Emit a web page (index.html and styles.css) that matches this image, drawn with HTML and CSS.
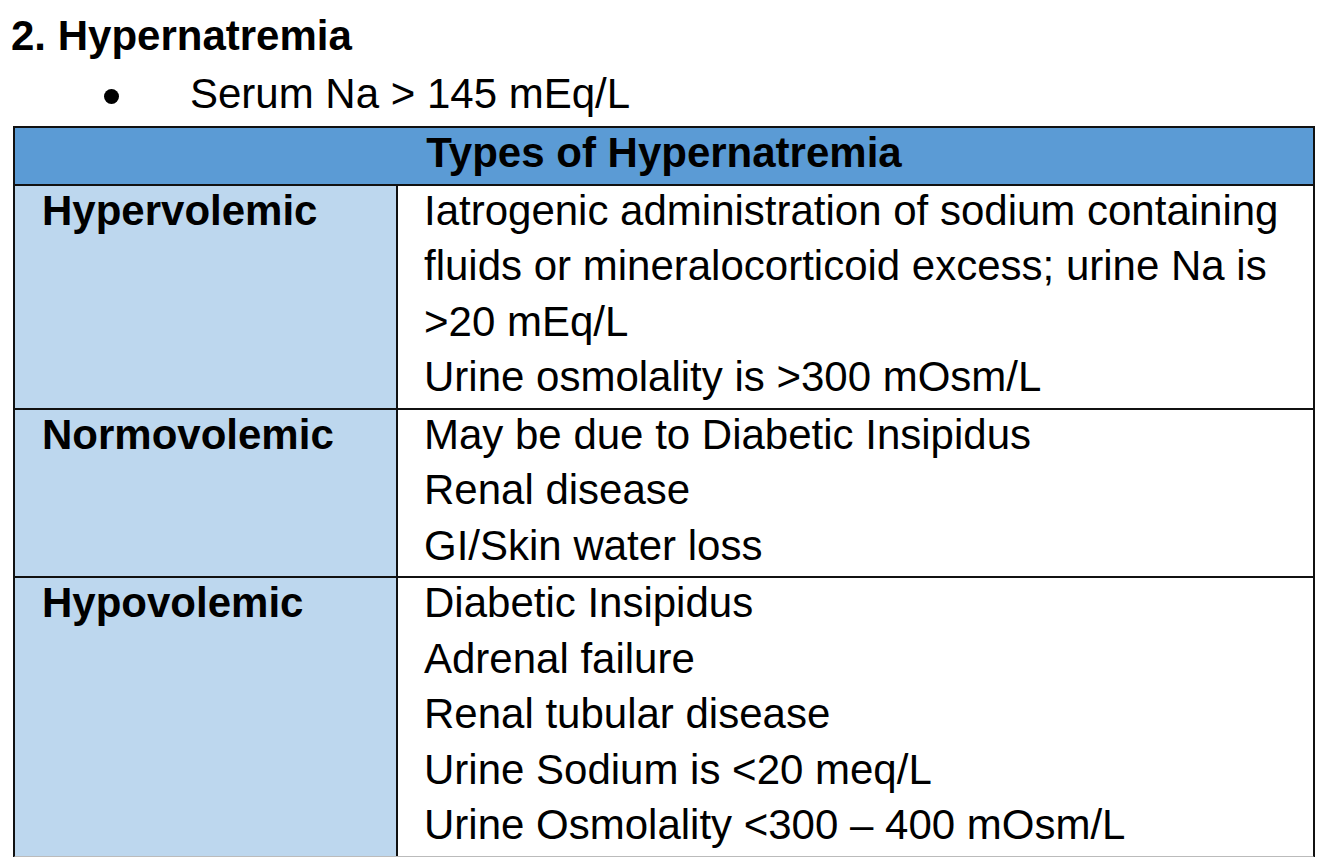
FILE: index.html
```html
<!DOCTYPE html>
<html lang="en">
<head>
<meta charset="utf-8">
<title>Hypernatremia</title>
<link rel="stylesheet" href="styles.css">
</head>
<body>
  <h2 class="title">2. Hypernatremia</h2>
  <ul class="crit">
    <li><span class="dot" aria-hidden="true"></span><span class="crit-text">Serum Na &gt; 145 mEq/L</span></li>
  </ul>
  <div class="table">
    <div class="cell head"><div class="inner">Types of Hypernatremia</div></div>

    <div class="cell type"><div class="inner">Hypervolemic</div></div>
    <div class="cell desc"><div class="inner">
      <p>Iatrogenic administration of sodium containing fluids or mineralocorticoid excess; urine Na is &gt;20 mEq/L</p>
      <p>Urine osmolality is &gt;300 mOsm/L</p>
    </div></div>

    <div class="cell type"><div class="inner">Normovolemic</div></div>
    <div class="cell desc"><div class="inner">
      <p>May be due to Diabetic Insipidus</p>
      <p>Renal disease</p>
      <p>GI/Skin water loss</p>
    </div></div>

    <div class="cell type last"><div class="inner">Hypovolemic</div></div>
    <div class="cell desc last"><div class="inner">
      <p>Diabetic Insipidus</p>
      <p>Adrenal failure</p>
      <p>Renal tubular disease</p>
      <p>Urine Sodium is &lt;20 meq/L</p>
      <p>Urine Osmolality &lt;300 – 400 mOsm/L</p>
    </div></div>
  </div>
</body>
</html>
```

FILE: styles.css
```css
html, body {
  background: #ffffff;
}

body {
  margin: 8px;
  font-family: "Liberation Sans", Arial, sans-serif;
  font-size: 42px;
  color: #000000;
}

.title {
  margin: 0 0 2px 0;
  padding-left: 3px;
  font-size: 42px;
  font-weight: bold;
  line-height: 56px;
}

.crit {
  list-style: none;
  margin: 0 0 4px 0;
  padding: 0;
}

.crit li {
  display: flex;
  align-items: flex-start;
  line-height: 56px;
}

.crit .dot {
  flex: none;
  width: 15px;
  height: 15px;
  border-radius: 50%;
  background: #000000;
  margin: 23px 71px 0 96px;
}

.table {
  display: grid;
  grid-template-columns: 383px 1fr;
  width: 1302px;
  box-sizing: border-box;
  margin-left: 5px;
  border: 2px solid #111111;
  border-bottom-color: #bbbbbb;
}

.cell {
  line-height: 55.5px;
  border-bottom: 2px solid #111111;
}

.cell.last {
  border-bottom: 0;
}

.inner {
  margin: -3px 0 3px 0;
}

.inner p {
  margin: 0;
}

.head {
  grid-column: 1 / -1;
  background: #5b9bd5;
  font-weight: bold;
  text-align: center;
}

.type {
  background: #bdd7ee;
  font-weight: bold;
  padding: 0 24px 0 27px;
  border-right: 2px solid #111111;
}

.desc {
  background: #ffffff;
  padding: 0 20px 0 26px;
}
```
